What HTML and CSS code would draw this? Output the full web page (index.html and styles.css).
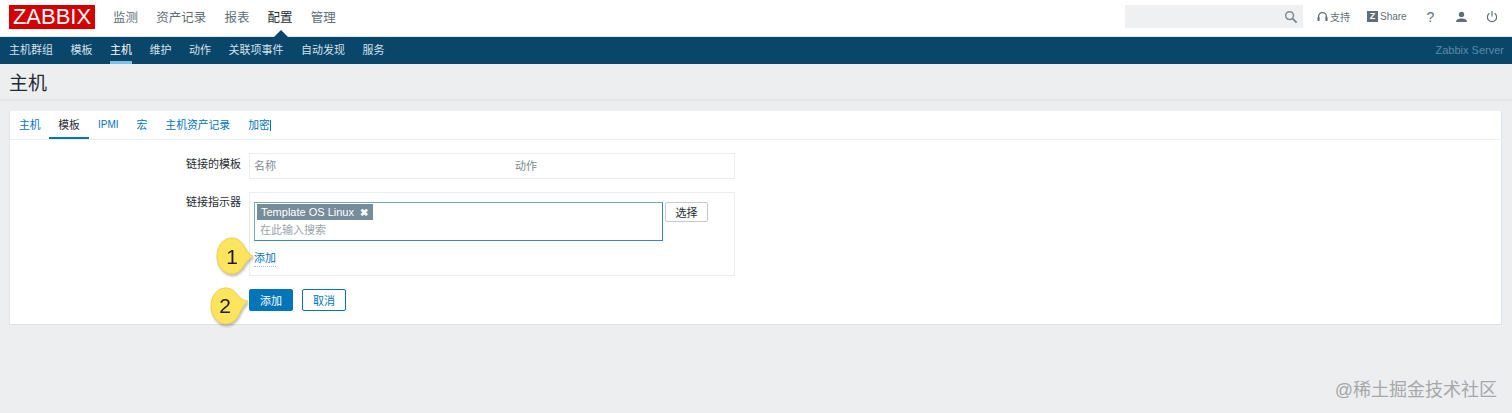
FILE: index.html
```html
<!DOCTYPE html>
<html lang="zh">
<head>
<meta charset="utf-8">
<title>主机</title>
<link rel="stylesheet" href="styles.css">
</head>
<body>
<header class="topbar">
  <div class="logo">ZABBIX</div>
  <nav class="mainnav">
    <a>监测</a><a>资产记录</a><a>报表</a><a class="active">配置</a><a>管理</a>
  </nav>
  <div class="tools">
    <div class="search">
      <svg class="search-icon" width="14" height="14" viewBox="0 0 14 14"><circle cx="5.6" cy="5.6" r="3.9" fill="none" stroke="#7d8a92" stroke-width="1.5"/><path d="M8.6 8.6l4 4" stroke="#7d8a92" stroke-width="2"/></svg>
    </div>
    <a class="tool support">
      <svg width="11" height="12" viewBox="0 0 11 12"><path d="M1.6 9V5.500a3.900 3.900 0 0 1 7.800 0V9" fill="none" stroke="#5f6f78" stroke-width="1.300"/><rect x="0.500" y="6" width="2" height="4" rx=".6" fill="#5f6f78"/><rect x="8.500" y="6" width="2" height="4" rx=".6" fill="#5f6f78"/></svg>
      <span>支持</span>
    </a>
    <a class="tool share"><span class="zbox">Z</span><span>Share</span></a>
    <a class="tool help">?</a>
    <a class="tool user">
      <svg width="13" height="12" viewBox="0 0 13 12"><circle cx="6.500" cy="3.400" r="2.700" fill="#5f6f78"/><path d="M1 11c0-2.600 2.500-3.600 5.500-3.600S12 8.400 12 11z" fill="#5f6f78"/></svg>
    </a>
    <a class="tool power">
      <svg width="12" height="13" viewBox="0 0 12 13"><path d="M3.400 3.300a4.600 4.600 0 1 0 5.200 0" fill="none" stroke="#5f6f78" stroke-width="1.200"/><path d="M6 1v5.500" stroke="#5f6f78" stroke-width="1.200"/></svg>
    </a>
  </div>
</header>
<nav class="subnav">
  <a>主机群组</a><a>模板</a><a class="active">主机</a><a>维护</a><a>动作</a><a>关联项事件</a><a>自动发现</a><a>服务</a>
  <span class="server">Zabbix Server</span>
</nav>
<main class="page">
  <h1 class="title">主机</h1>
  <section class="card">
    <div class="tabs">
      <a>主机</a><a class="active">模板</a><a class="latin">IPMI</a><a>宏</a><a>主机资产记录</a><a class="caret">加密</a>
    </div>
    <div class="form">
      <div class="row row-linked">
        <label>链接的模板</label>
        <div class="box head-box"><span class="col-name">名称</span><span>动作</span></div>
      </div>
      <div class="row row-link">
        <label>链接指示器</label>
        <div class="box link-box">
          <div class="ms-row">
            <div class="multiselect">
              <span class="chip">Template OS Linux<b class="chip-x">✖</b></span>
              <span class="placeholder">在此输入搜索</span>
            </div>
            <button class="btn-select">选择</button>
          </div>
          <a class="add-link">添加</a>
        </div>
      </div>
      <div class="actions">
        <button class="btn-primary">添加</button>
        <button class="btn-cancel">取消</button>
      </div>
    </div>
  </section>
</main>
<svg class="callout callout-1" width="44" height="44" viewBox="0 0 44 44">
  <path d="M39 21C35 20 33 16 31 13C28 7 24 3 18 3C9 3 3 11 3 21C3 31 9 39 18 39C24 39 29 33 31 29C33 26 36 23 39 21Z" class="callout-shape"/>
  <text x="18" y="28.500" class="callout-text">1</text>
</svg>
<svg class="callout callout-2" width="44" height="44" viewBox="0 0 44 44">
  <path d="M41 17C37 17 34 15 31 12C28 7 24 4 19 4C10 4 4 12 4 22C4 32 10 40 19 40C26 40 31 34 33 28C35 24 38 20 41 17Z" class="callout-shape"/>
  <text x="18" y="29" class="callout-text">2</text>
</svg>
<div class="watermark">@稀土掘金技术社区</div>
</body>
</html>
```
FILE: styles.css
```css
* { box-sizing: border-box; }
html, body { margin: 0; padding: 0; }
body {
  width: 1512px;
  height: 413px;
  overflow: hidden;
  background: #ecEEF0;
  font-family: "Liberation Sans", "Noto Sans CJK SC", sans-serif;
  font-size: 11px;
  color: #1f2c33;
  position: relative;
}
.topbar {
  height: 36px;
  background: #fff;
  display: flex;
  align-items: center;
  padding-left: 9px;
}
.logo {
  width: 86px;
  height: 24px;
  margin-top: -2px;
  background: #d40000;
  color: #fff;
  font-size: 22px;
  line-height: 24px;
  text-align: center;
}
.mainnav { display: flex; gap: 18.2px; margin-left: 18px; margin-top: -3px; }
.mainnav a { font-size: 12.5px; color: #5f6f78; }
.mainnav a.active { color: #1f2c33; position: relative; }
.mainnav a.active::after {
  content: "";
  position: absolute;
  left: 6px;
  top: 23px;
  border: 7px solid transparent;
  border-top: 0;
  border-bottom: 7px solid #0a466a;
}
.tools { margin-left: auto; display: flex; align-items: center; align-self: flex-start; height: 33px; padding-right: 14px; }
.search {
  width: 178px;
  height: 23px;
  background: #eff0f1;
  margin-right: 14px;
  display: flex;
  align-items: center;
  justify-content: flex-end;
  padding-right: 5px;
}
.tool { display: flex; align-items: center; gap: 2px; color: #5f6f78; font-size: 10px; }
.support { width: 50px; }
.share { width: 56px; }
.zbox {
  width: 11px; height: 11px; background: #5f6f78; color: #fff;
  font-size: 9px; font-weight: bold; line-height: 11px; text-align: center;
}
.help { width: 15px; font-size: 14px; justify-content: center; }
.user { width: 13px; margin-left: 16.5px; }
.power { width: 12px; margin-left: 18.5px; }
.subnav {
  height: 28px;
  background: #0a466a;
  border-top: 1px solid #d7ecf5;
  display: flex;
  align-items: stretch;
  padding-left: 9px;
  gap: 17.5px;
}
.subnav a {
  color: #d4e2ea;
  font-size: 11px;
  line-height: 26px;
  height: 27px;
}
.subnav a.active { color: #fff; border-bottom: 3px solid #7fc1e6; }
.server { margin-left: auto; padding-right: 8px; color: #5c8aa3; font-size: 11px; line-height: 26px; }
.page { display: flex; flex-direction: column; }
.title {
  margin: 0 0 10px;
  height: 37px;
  padding: 8px 0 0 9px;
  font-size: 19px;
  font-weight: normal;
  line-height: 24px;
  color: #1f2c33;
  border-bottom: 2px solid #e4e6e8;
}
.card {
  margin: 0 10px 0 9px;
  height: 214px;
  background: #fff;
  border: 1px solid #e0e3e5;
  border-top: 0;
}
.tabs {
  height: 29px;
  display: flex;
  gap: 18px;
  border-bottom: 1px solid #ebeef0;
}
.tabs a { color: #0275b8; font-size: 10.8px; line-height: 28px; }
.tabs a:first-child { margin-left: 9px; }
.tabs a.latin { font-size: 10px; }
.tabs a.active {
  color: #1f2c33;
  border-bottom: 2px solid #0275b8;
  height: 28px;
  width: 40px;
  text-align: center;
  margin: 0 -9px 0 -9.6px;
}
.tabs a.caret { position: relative; }
.tabs a.caret::after {
  content: "";
  position: absolute;
  right: -1px;
  top: 9px;
  width: 1px;
  height: 11px;
  background: #0275b8;
}
.form { padding-top: 13px; }
.row { display: flex; }
.row label {
  width: 231px;
  text-align: right;
  padding-top: 4px;
  color: #1f2c33;
  font-size: 11px;
  line-height: 15px;
}
.box { margin-left: 8px; width: 486px; border: 1px solid #ebeef0; background: #fff; }
.head-box { height: 26px; display: flex; align-items: center; padding: 0 0 2px 4px; color: #7d8a92; font-size: 11px; }
.col-name { width: 261px; }
.row-link { margin-top: 13px; }
.row-link label { padding-top: 3px; }
.link-box { height: 84px; padding: 9px 4px 0; }
.ms-row { display: flex; align-items: flex-start; gap: 2px; }
.multiselect {
  width: 409px;
  height: 39px;
  border: 1px solid #7aa7b5;
  border-bottom-color: #3f86ab;
  border-right-color: #3f86ab;
  padding: 1px 2px;
  display: flex;
  flex-direction: column;
}
.chip {
  align-self: flex-start;
  height: 16px;
  width: 116px;
  background: #768d99;
  color: #fff;
  font-size: 11px;
  line-height: 16px;
  padding: 0 4px;
  white-space: nowrap;
}
.chip-x { font-size: 10px; margin-left: 6px; }
.placeholder { color: #9aa5ab; font-size: 11px; padding: 3px 0 0 3px; line-height: 14px; }
.btn-select {
  width: 43px; height: 20px;
  padding: 0;
  background: #fff;
  border: 1px solid #c5cacd;
  border-radius: 2px;
  font: inherit;
  color: #1f2c33;
}
.add-link {
  display: inline-block;
  margin-top: 10px;
  color: #0275b8;
  line-height: 15px;
  border-bottom: 1px dotted #8ec1dd;
}
.actions { margin: 13px 0 0 239px; display: flex; gap: 9px; }
.btn-primary, .btn-cancel {
  width: 44px;
  height: 22px;
  padding: 0;
  font: inherit;
  border-radius: 2px;
}
.btn-primary { background: #0275b8; border: 1px solid #0275b8; color: #fff; }
.btn-cancel { background: #fff; border: 1px solid #0275b8; color: #0275b8; }
.callout { position: absolute; filter: drop-shadow(1px 2px 1px rgba(0,0,0,.25)); }
.callout-1 { left: 214px; top: 235px; }
.callout-2 { left: 207px; top: 284px; }
.callout-shape { fill: #fde45f; stroke: #ecce4c; }
.callout-text { font-size: 21px; fill: #1a1a1a; font-family: "Liberation Sans", sans-serif; text-anchor: middle; }
.watermark {
  position: absolute;
  right: 15px;
  top: 378px;
  font-size: 18px;
  line-height: 24px;
  color: #a6a8aa;
}
```
